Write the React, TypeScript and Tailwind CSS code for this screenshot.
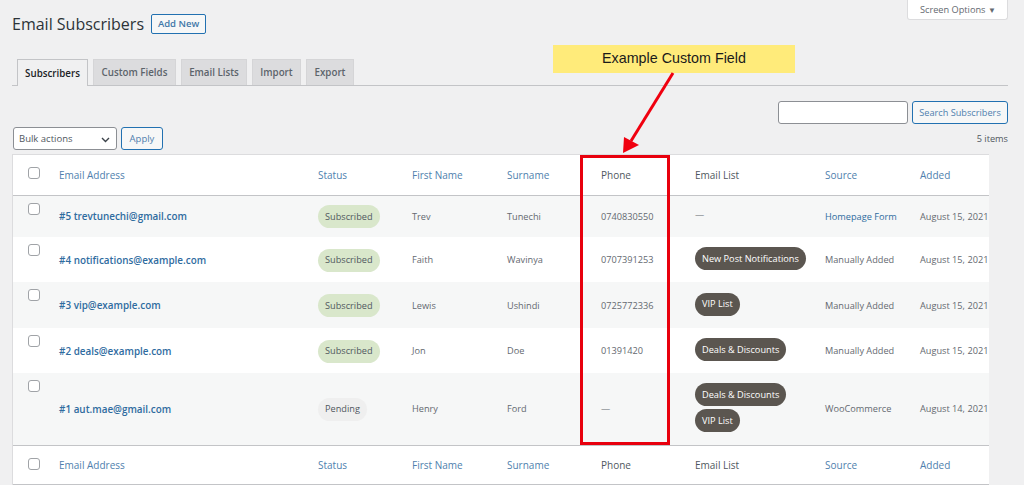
const FONT = "font-['Open_Sans','Noto_Sans',sans-serif]";

const TABS = [
  { label: 'Subscribers', width: 'w-[71px]' },
  { label: 'Custom Fields', width: 'w-[83px]' },
  { label: 'Email Lists', width: 'w-[66px]' },
  { label: 'Import', width: 'w-[49px]' },
  { label: 'Export', width: 'w-[48px]' },
];

type Row = {
  id: number;
  email: string;
  status: string;
  first: string;
  last: string;
  phone: string;
  lists: string[];
  source: string;
  added: string;
  height: string;
  alt: boolean;
};

const ROWS: Row[] = [
  { id: 5, email: 'trevtunechi@gmail.com', status: 'Subscribed', first: 'Trev', last: 'Tunechi', phone: '0740830550', lists: [], source: 'Homepage Form', added: 'August 15, 2021', height: 'h-[42px]', alt: true },
  { id: 4, email: 'notifications@example.com', status: 'Subscribed', first: 'Faith', last: 'Wavinya', phone: '0707391253', lists: ['New Post Notifications'], source: 'Manually Added', added: 'August 15, 2021', height: 'h-[45px]', alt: false },
  { id: 3, email: 'vip@example.com', status: 'Subscribed', first: 'Lewis', last: 'Ushindi', phone: '0725772336', lists: ['VIP List'], source: 'Manually Added', added: 'August 15, 2021', height: 'h-[46px]', alt: true },
  { id: 2, email: 'deals@example.com', status: 'Subscribed', first: 'Jon', last: 'Doe', phone: '01391420', lists: ['Deals & Discounts'], source: 'Manually Added', added: 'August 15, 2021', height: 'h-[45px]', alt: false },
  { id: 1, email: 'aut.mae@gmail.com', status: 'Pending', first: 'Henry', last: 'Ford', phone: '—', lists: ['Deals & Discounts', 'VIP List'], source: 'WooCommerce', added: 'August 14, 2021', height: 'h-[72px]', alt: true },
];

function Checkbox() {
  return <span className="block w-[12px] h-[12px] rounded-[3px] border border-[#a0a3a7] bg-white" />;
}

function HeadRow({ top }: { top?: boolean }) {
  const link = 'text-[#4f7fae] font-normal text-left text-[10px] align-middle pt-[1px]';
  const plain = 'text-[#50575e] font-normal text-left text-[10px] align-middle pt-[1px]';
  return (
    <tr className={top ? 'h-[40px] border-b border-[#c3c4c7]' : 'h-[39px] border-t border-b border-[#c3c4c7]'}>
      <th className="pl-[15px] align-top pt-[12px]"><Checkbox /></th>
      <th className={link}>Email Address</th>
      <th className={link}>Status</th>
      <th className={link}>First Name</th>
      <th className={link}>Surname</th>
      <th className={plain}>Phone</th>
      <th className={plain}>Email List</th>
      <th className={link}>Source</th>
      <th className={link}>Added</th>
    </tr>
  );
}

export default function App() {
  return (
    <div className={`${FONT} relative w-[1024px] h-[485px] overflow-hidden bg-[#f0f0f1] text-[#3c434a]`}>
      <div className="flex justify-end pr-[16px]">
        <div className="w-[101px] h-[20px] bg-white border border-[#dcdcde] border-t-0 rounded-b-[3px] flex items-center justify-between pl-[12px] pr-[11px] text-[9.2px] text-[#646970]">
          Screen Options <span className="text-[8px] leading-none">▼</span>
        </div>
      </div>

      <div className="ml-[12px] w-[996px] flex items-center gap-[7px] mt-[-6px] h-[20px]">
        <h1 className="text-[16px] leading-none text-[#2c3338] font-normal">Email Subscribers</h1>
        <button className="w-[55px] h-[20px] border border-[#2271b1] rounded-[2px] text-[9.5px] font-semibold text-[#3f78a8] bg-[#f6f7f7]">
          Add New
        </button>
      </div>

      <div className="ml-[12px] w-[996px] mt-[25px] h-[27px] border-b border-[#c3c4c7] flex pl-[5px] gap-[5px]">
        {TABS.map((tab, i) => (
          <div
            key={tab.label}
            className={
              i === 0
                ? `${tab.width} h-[27px] pt-[2px] flex items-center justify-center border border-b-0 border-[#c3c4c7] bg-[#f0f0f1] text-[9.75px] font-semibold text-[#1d2327]`
                : `${tab.width} h-[26px] pt-[2px] flex items-center justify-center border border-b-0 border-[#d5d5d7] bg-[#dcdcde] text-[9.75px] font-semibold text-[#5d646b]`
            }
          >
            {tab.label}
          </div>
        ))}
      </div>

      <div className="ml-[13px] w-[995px] mt-[15px] flex justify-end gap-[4px] h-[23px]">
        <div className="w-[130px] h-[23px] bg-white border border-[#8c8f94] rounded-[3px]" />
        <button className="w-[96px] h-[23px] border border-[#2271b1] rounded-[3px] bg-[#f6f7f7] text-[9.2px] text-[#4f7fae]">
          Search Subscribers
        </button>
      </div>

      <div className="ml-[13px] w-[995px] mt-[3px] h-[27px] flex items-start justify-between">
        <div className="flex gap-[4px]">
          <div className="w-[104px] h-[23px] pt-[2px] bg-white border border-[#8c8f94] rounded-[3px] flex items-center justify-between pl-[5px] pr-[6px] text-[9.5px] text-[#50575e]">
            Bulk actions
            <svg width="9" height="6" viewBox="0 0 9 6" fill="none" stroke="#3c434a" strokeWidth="1.4">
              <path d="M1 1l3.5 3.5L8 1" />
            </svg>
          </div>
          <button className="w-[42px] h-[23px] pt-[2px] border border-[#2271b1] rounded-[3px] bg-[#f6f7f7] text-[9.5px] text-[#4f7fae]">
            Apply
          </button>
        </div>
        <span className="text-[9.2px] text-[#50575e] mt-[5px]">5 items</span>
      </div>

      <div className="ml-[12px] w-[977px] overflow-hidden bg-white border-l border-t border-[#dcdcde]">
        <table className="table-fixed border-collapse w-[1020px]">
          <colgroup>
            <col className="w-[46px]" />
            <col className="w-[259px]" />
            <col className="w-[94px]" />
            <col className="w-[95px]" />
            <col className="w-[94px]" />
            <col className="w-[94px]" />
            <col className="w-[130px]" />
            <col className="w-[95px]" />
            <col className="w-[113px]" />
          </colgroup>
          <thead>
            <HeadRow top />
          </thead>
          <tbody>
            {ROWS.map((row) => (
              <tr key={row.id} className={`${row.height} ${row.alt ? 'bg-[#f6f7f7]' : 'bg-white'} text-[9.2px] text-[#646970]`}>
                <td className="pl-[15px] align-top pt-[7px]"><Checkbox /></td>
                <td className="pt-[1px] text-[9.9px] font-semibold text-[#2f6c9f] whitespace-nowrap">
                  #{row.id} {row.email}
                </td>
                <td className="pt-[1px]">
                  <span
                    className={
                      row.status === 'Subscribed'
                        ? 'inline-block px-[7px] py-[4.5px] rounded-[12px] bg-[#d9e7cb] text-[#50575e] leading-[14px]'
                        : 'inline-block px-[7px] py-[4.5px] rounded-[12px] bg-[#efefef] text-[#50575e] leading-[14px]'
                    }
                  >
                    {row.status}
                  </span>
                </td>
                <td className="pt-[1px]">{row.first}</td>
                <td className="pt-[1px]">{row.last}</td>
                <td className="pt-[1px]">{row.phone}</td>
                <td className="pb-[2px]">
                  {row.lists.length === 0 && '—'}
                  <div className="flex flex-col items-start gap-[3px]">
                    {row.lists.map((list) => (
                      <span key={list} className="px-[7px] py-[4.5px] rounded-[12px] bg-[#5b5650] text-white leading-[14px] whitespace-nowrap">
                        {list}
                      </span>
                    ))}
                  </div>
                </td>
                <td className={row.source === 'Homepage Form' ? 'pt-[1px] text-[#2f6c9f] whitespace-nowrap' : 'pt-[1px] whitespace-nowrap'}>{row.source}</td>
                <td className="pt-[1px] whitespace-nowrap">{row.added}</td>
              </tr>
            ))}
          </tbody>
          <tfoot>
            <HeadRow />
          </tfoot>
        </table>
      </div>

      {/* annotation */}
      <div className="absolute left-[553px] top-[45px] w-[242px] h-[28px] bg-[#ffeb7a] flex items-center justify-center font-['Liberation_Sans',sans-serif] text-[14.3px] text-[#1a1a1a]">
        Example Custom Field
      </div>
      <div className="absolute left-[580px] top-[155px] w-[90px] h-[290px] border-[3px] border-[#e8000d]" />
      <svg className="absolute left-[615px] top-[70px]" width="70" height="90" viewBox="0 0 70 90">
        <path d="M58 3L16 71" stroke="#f0000f" strokeWidth="3" fill="none" />
        <path d="M8 83L9 67L24 75Z" fill="#f0000f" />
      </svg>
    </div>
  );
}
